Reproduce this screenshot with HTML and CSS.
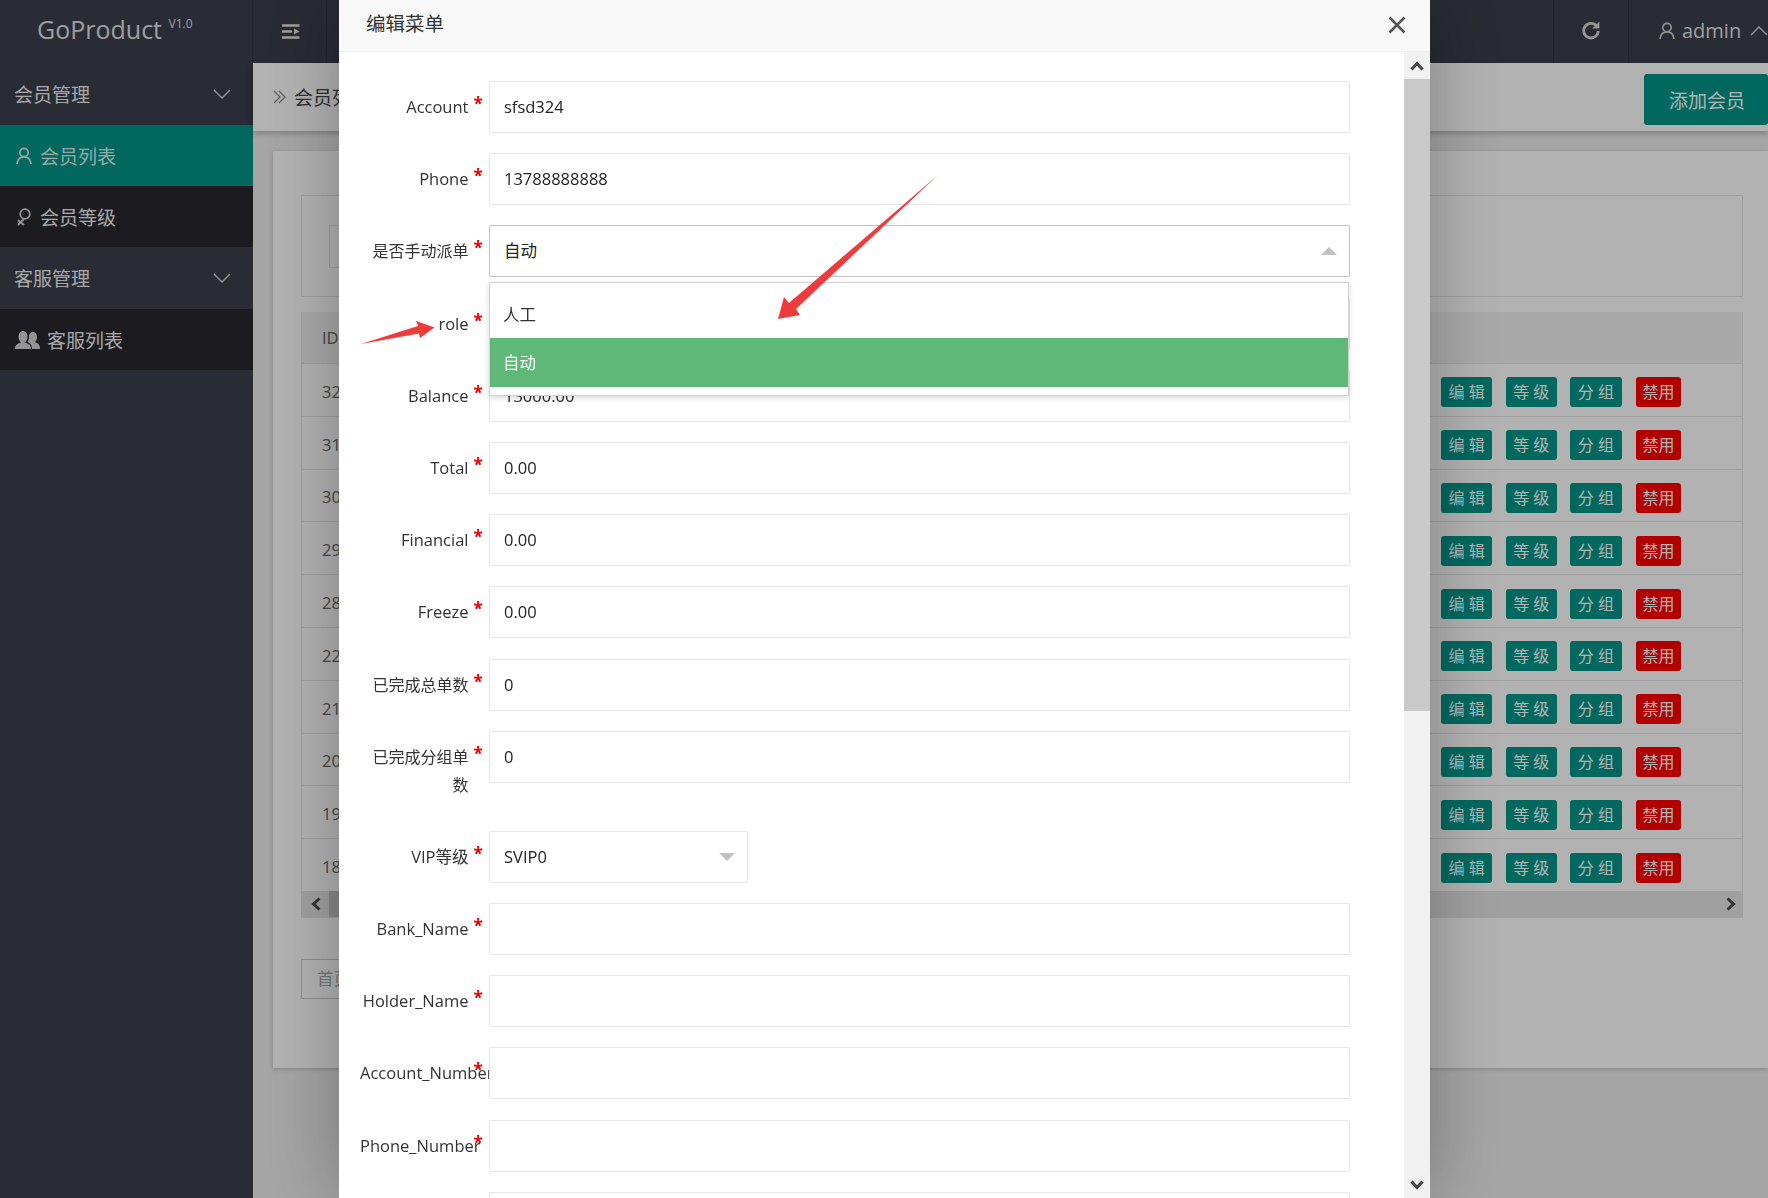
FILE: index.html
```html
<!DOCTYPE html>
<html lang="zh">
<head>
<meta charset="utf-8">
<title>GoProduct</title>
<link rel="stylesheet" href="styles.css">
</head>
<body>
<div class="app">
  <header class="topbar">
    <div class="logo">GoProduct <sup>V1.0</sup></div>
    <div class="top-cell menu-cell">
      <svg width="18" height="15" viewBox="0 0 18 15"><path d="M0 1.500h17.500M0 7.500h10M0 13.500h17.500" stroke="#e4e4e4" stroke-width="2.400" fill="none"/><path d="M12 4.500l5.500 3-5.500 3z" fill="#e4e4e4"/></svg>
    </div>
    <div class="top-spacer"></div>
    <div class="top-cell refresh-cell">
      <svg width="20" height="20" viewBox="0 0 20 20"><path d="M15.800 6.200A7.300 7.300 0 1 0 17.300 11" stroke="#d4d4d4" stroke-width="2.800" fill="none"/><path d="M18.400 1.400v7.200h-7.200z" fill="#d4d4d4"/></svg>
    </div>
    <div class="user-cell">
      <svg width="16" height="18" viewBox="0 0 16 18"><circle cx="8" cy="5.500" r="4.200" stroke="#cfcfcf" stroke-width="1.700" fill="none"/><path d="M1 17c.4-4.500 3-7.200 7-7.200s6.600 2.700 7 7.200" stroke="#cfcfcf" stroke-width="1.700" fill="none"/></svg>
      <span class="user-name">admin</span>
      <svg class="user-arrow" width="18" height="10" viewBox="0 0 18 10"><path d="M1 9l8-8 8 8" stroke="#cfcfcf" stroke-width="1.500" fill="none"/></svg>
    </div>
  </header>
  <div class="content-row">
    <nav class="sidebar">
      <div class="nav-group">会员管理<svg width="18" height="11" viewBox="0 0 18 11"><path d="M1 1l8 8 8-8" stroke="#cfcfcf" stroke-width="1.500" fill="none"/></svg></div>
      <div class="nav-item active">
        <svg width="16" height="18" viewBox="0 0 16 18"><circle cx="8" cy="5.500" r="4.200" stroke="#d8efec" stroke-width="1.700" fill="none"/><path d="M1 17c.4-4.500 3-7.200 7-7.200s6.600 2.700 7 7.200" stroke="#d8efec" stroke-width="1.700" fill="none"/></svg>
        <span>会员列表</span>
      </div>
      <div class="nav-item">
        <svg width="16" height="18" viewBox="0 0 16 18"><circle cx="9" cy="6" r="4.800" stroke="#d4d4d4" stroke-width="1.800" fill="none"/><path d="M8 11L2 17M2 12l6 5" stroke="#d4d4d4" stroke-width="1.800" fill="none"/></svg>
        <span>会员等级</span>
      </div>
      <div class="nav-group">客服管理<svg width="18" height="11" viewBox="0 0 18 11"><path d="M1 1l8 8 8-8" stroke="#cfcfcf" stroke-width="1.500" fill="none"/></svg></div>
      <div class="nav-item">
        <svg class="users-icon" width="25" height="18" viewBox="0 0 25 18"><path d="M0 18c0-4 2-5 6-6.500-2-2-2.500-4-2.500-6C3.500 2.500 5.500 0 8 0s4.500 2.500 4.500 5.500c0 2-.5 4-2.500 6 4 1.500 6 2.500 6 6.500z" fill="#d4d4d4"/><path d="M17 18c0-4-1.500-5.500-4.500-7 1-1.500 1.500-3.500 1.500-5.500C14 3 15.500 1 18 1s4 2.500 4 5c0 2-.5 3.500-2 5 3.500 1.500 5 3 5 7z" fill="#d4d4d4"/></svg>
        <span>客服列表</span>
      </div>
    </nav>
    <main class="main">
      <div class="crumb-bar">
        <div class="crumb"><svg class="crumb-mark" width="14" height="14" viewBox="0 0 14 14"><path d="M1 1l6 6-6 6M6 1l6 6-6 6" stroke="#888" stroke-width="1.300" fill="none"/></svg>会员列表</div>
        <div class="add-btn">添加会员</div>
      </div>
      <section class="panel">
        <div class="search-card"><div class="search-input"></div></div>
        <div class="table">
          <div class="thead">ID</div>
          <div class="tr"><div class="td-id">32</div><div class="ops"><span class="btn">编 辑</span><span class="btn">等 级</span><span class="btn">分 组</span><span class="btn btn-red">禁用</span></div></div>
          <div class="tr"><div class="td-id">31</div><div class="ops"><span class="btn">编 辑</span><span class="btn">等 级</span><span class="btn">分 组</span><span class="btn btn-red">禁用</span></div></div>
          <div class="tr"><div class="td-id">30</div><div class="ops"><span class="btn">编 辑</span><span class="btn">等 级</span><span class="btn">分 组</span><span class="btn btn-red">禁用</span></div></div>
          <div class="tr"><div class="td-id">29</div><div class="ops"><span class="btn">编 辑</span><span class="btn">等 级</span><span class="btn">分 组</span><span class="btn btn-red">禁用</span></div></div>
          <div class="tr"><div class="td-id">28</div><div class="ops"><span class="btn">编 辑</span><span class="btn">等 级</span><span class="btn">分 组</span><span class="btn btn-red">禁用</span></div></div>
          <div class="tr"><div class="td-id">22</div><div class="ops"><span class="btn">编 辑</span><span class="btn">等 级</span><span class="btn">分 组</span><span class="btn btn-red">禁用</span></div></div>
          <div class="tr"><div class="td-id">21</div><div class="ops"><span class="btn">编 辑</span><span class="btn">等 级</span><span class="btn">分 组</span><span class="btn btn-red">禁用</span></div></div>
          <div class="tr"><div class="td-id">20</div><div class="ops"><span class="btn">编 辑</span><span class="btn">等 级</span><span class="btn">分 组</span><span class="btn btn-red">禁用</span></div></div>
          <div class="tr"><div class="td-id">19</div><div class="ops"><span class="btn">编 辑</span><span class="btn">等 级</span><span class="btn">分 组</span><span class="btn btn-red">禁用</span></div></div>
          <div class="tr"><div class="td-id">18</div><div class="ops"><span class="btn">编 辑</span><span class="btn">等 级</span><span class="btn">分 组</span><span class="btn btn-red">禁用</span></div></div>
          <div class="hscroll">
            <div class="hscroll-btn"><svg width="12" height="14" viewBox="0 0 12 14"><path d="M9.500 1.500L3.500 7l6 5.500" stroke="#4a4a4a" stroke-width="3" fill="none"/></svg></div>
            <div class="hscroll-thumb"></div>
            <div class="hscroll-btn hscroll-end"><svg width="12" height="14" viewBox="0 0 12 14"><path d="M2.500 1.500L8.500 7l-6 5.500" stroke="#4a4a4a" stroke-width="3" fill="none"/></svg></div>
          </div>
        </div>
        <div class="pager">首页</div>
      </section>
    </main>
  </div>
</div>

<div class="overlay"></div>

<div class="modal">
  <div class="modal-head">
    <span class="modal-title">编辑菜单</span>
    <svg class="modal-close" width="18" height="18" viewBox="0 0 18 18"><path d="M1.500 1.500l15 15M16.500 1.500l-15 15" stroke="#555" stroke-width="2.500" fill="none"/></svg>
  </div>
  <div class="modal-body">
    <form class="form">
      <div class="row"><label class="label">Account<i class="star">*</i></label><div class="input">sfsd324</div></div>
      <div class="row"><label class="label">Phone<i class="star">*</i></label><div class="input">13788888888</div></div>
      <div class="row"><label class="label label-cjk">是否手动派单<i class="star">*</i></label><div class="input input-open">自动<span class="tri-up"></span>
        <div class="dropdown"><div class="option">人工</div><div class="option selected">自动</div></div>
      </div></div>
      <div class="row"><label class="label">role<i class="star">*</i></label><div class="input"></div></div>
      <div class="row"><label class="label">Balance<i class="star">*</i></label><div class="input">13000.00</div></div>
      <div class="row"><label class="label">Total<i class="star">*</i></label><div class="input">0.00</div></div>
      <div class="row"><label class="label">Financial<i class="star">*</i></label><div class="input">0.00</div></div>
      <div class="row"><label class="label">Freeze<i class="star">*</i></label><div class="input">0.00</div></div>
      <div class="row"><label class="label label-cjk">已完成总单数<i class="star">*</i></label><div class="input">0</div></div>
      <div class="row"><label class="label label-cjk">已完成分组单数<i class="star">*</i></label><div class="input">0</div></div>
      <div class="row"><label class="label">VIP等级<i class="star">*</i></label><div class="input input-short">SVIP0<span class="tri-down"></span></div></div>
      <div class="row"><label class="label">Bank_Name<i class="star">*</i></label><div class="input"></div></div>
      <div class="row"><label class="label">Holder_Name<i class="star">*</i></label><div class="input"></div></div>
      <div class="row"><label class="label">Account_Number<i class="star">*</i></label><div class="input"></div></div>
      <div class="row"><label class="label">Phone_Number<i class="star">*</i></label><div class="input"></div></div>
      <div class="row"><label class="label"></label><div class="input"></div></div>
    </form>
    <div class="vscroll">
      <div class="vscroll-btn"><svg width="14" height="10" viewBox="0 0 14 10"><path d="M1.500 8.500L7 2.500l5.500 6" stroke="#444" stroke-width="3" fill="none"/></svg></div>
      <div class="vscroll-thumb"></div>
      <div class="vscroll-track"></div>
      <div class="vscroll-btn vscroll-bottom"><svg width="14" height="10" viewBox="0 0 14 10"><path d="M1.500 1.500L7 7.500l5.500-6" stroke="#444" stroke-width="3" fill="none"/></svg></div>
    </div>
  </div>
</div>

<svg class="annotations" width="1768" height="1198" viewBox="0 0 1768 1198">
  <polygon class="arrow" points="938,175 796,309 800,315 778,319 784,297 789,303"/>
  <polygon class="arrow" points="361,344 418,326 416,321 434.500,327.500 420,338 419,333.500"/>
</svg>
</body>
</html>
```
FILE: styles.css
```css
* { box-sizing: border-box; }
html, body { margin: 0; height: 1198px; overflow: hidden; }
body {
  font-family: "Open Sans", "Noto Sans CJK SC", sans-serif;
  font-size: 16.5px;
  color: #333;
  background: #ececec;
}
.app { display: flex; flex-direction: column; height: 1198px; }

/* top bar */
.topbar { display: flex; align-items: stretch; height: 63px; background: #3c3f4c; flex: none; }
.logo {
  width: 253px; padding: 12px 0 0 37px; font-size: 25px; line-height: 34px;
  color: #fff; opacity: .85; border-right: 1px solid #33363f; white-space: nowrap;
}
.logo sup { font-size: 12px; vertical-align: 11px; line-height: 0; }
.top-cell { display: flex; align-items: center; justify-content: center; }
.menu-cell { width: 74px; border-right: 1px solid #33363f; padding-left: 2px; }
.top-spacer { flex: 1; }
.refresh-cell { width: 76px; border-left: 1px solid #33363f; border-right: 1px solid #33363f; padding-bottom: 3px; }
.user-cell { width: 139px; display: flex; align-items: center; padding: 0 0 2px 30px; gap: 7px; color: #e2e2e2; font-size: 20px; overflow: hidden; }
.user-arrow { margin-left: 2px; flex: none; }
.user-cell svg:first-child { flex: none; }

/* layout */
.content-row { display: flex; flex: 1; min-height: 0; }
.sidebar { width: 253px; background: #3c3f4c; flex: none; font-size: 19px; color: #f0f0f0; }
.nav-group {
  height: 62px; display: flex; align-items: center; justify-content: space-between;
  padding: 0 22px 0 14px; background: #3c3f4c;
}
.nav-item {
  height: 61px; display: flex; align-items: center; gap: 8px;
  padding-left: 16px; background: #27282f;
}
.nav-item.active { background: #009688; color: #d8efec; }
.users-icon { margin-left: -1px; margin-right: -1px; }

.main { flex: 1; min-width: 0; }
.crumb-bar {
  height: 68px; background: #fff; display: flex; align-items: center; justify-content: space-between;
  box-shadow: 0 2px 6px rgba(0,0,0,.25);
}
.crumb { padding-left: 20px; font-size: 19px; display: flex; align-items: center; color: #444; }
.crumb-mark { margin-right: 7px; flex: none; }
.add-btn {
  width: 124px; height: 51px; margin-top: 5px; background: #009688; color: #fff; border-radius: 3px;
  font-size: 19px; display: flex; align-items: center; padding-left: 25px;
}
.panel {
  margin: 20px 0 0 20px; height: 917px; background: #fff; padding: 44px 25px 0 28px;
  box-shadow: 0 1px 4px rgba(0,0,0,.2);
}
.search-card { height: 102px; border: 1px solid #e6e6e6; padding: 29px 0 0 27px; }
.search-input { width: 200px; height: 43px; border: 1px solid #e6e6e6; }
.table { margin-top: 15px; border: 1px solid #e6e6e6; border-top: 0; }
.thead { height: 51px; background: #f2f2f2; padding-left: 20px; line-height: 51px; color: #666; }
.tr { height: 52.800px; display: grid; grid-template-columns: 1139px auto; align-items: center; border-top: 1px solid #e6e6e6; }
.td-id { padding: 3px 0 0 20px; color: #666; }
.ops { display: flex; gap: 13.500px; padding-top: 5px; }
.btn {
  height: 30px; padding: 0 7.500px; background: #009688; color: #fff; border-radius: 3px;
  font-size: 16px; line-height: 31px; white-space: nowrap;
}
.btn-red { background: #f00; padding: 0 6.500px; margin-left: 1px; }
.hscroll { height: 26px; background: #e6e6e6; display: flex; }
.hscroll-btn { width: 27px; display: flex; align-items: center; justify-content: center; }
.hscroll-thumb { width: 400px; background: #c4c4c4; }
.hscroll-end { margin-left: auto; padding-left: 4px; }
.pager {
  margin-top: 41px; width: 90px; height: 40px; border: 1px solid #ccc; padding-left: 15px;
  line-height: 38px; color: #aaa;
}

/* overlay and modal */
.overlay { position: fixed; inset: 0; background: rgba(0,0,0,.3); }
.modal {
  position: fixed; left: 339px; top: 0; width: 1091px; height: 1198px; background: #fff;
  box-shadow: 0 0 70px rgba(0,0,0,.3); display: flex; flex-direction: column;
}
.modal-head {
  height: 52px; flex: none; background: #f8f8f8; border-bottom: 1px solid #eee;
  display: flex; align-items: center; justify-content: space-between; padding: 0 24px 6px 27px;
}
.modal-title { font-size: 19.500px; color: #333; }
.modal-close { margin-top: 5px; }
.modal-body { flex: 1; min-height: 0; display: flex; overflow: hidden; }
.form { width: 1065px; padding: 29px 54px 0 21px; flex: none; }
.row { display: flex; align-items: flex-start; margin-bottom: 20.200px; }
.label {
  position: relative; width: 129px; flex: none; padding: 12px 20.500px 12px 0; line-height: 28px;
  text-align: right; color: #333; min-height: 52px;
}
.label-cjk { font-size: 16px; }
.star {
  position: absolute; left: 113.500px; top: 11px; color: #e60000; font-style: normal; font-weight: 700; font-size: 17px; line-height: 24px;
}
.input {
  position: relative; flex: 1; height: 52px; background: #fff; border: 1px solid #e6e6e6; border-radius: 2px;
  padding-left: 14px; line-height: 50px; color: #222;
}
.input-open { border-color: #c2c2c2; }
.input-short { flex: none; width: 259px; }
.tri-up, .tri-down { position: absolute; width: 0; height: 0; border-left: 8px solid transparent; border-right: 8px solid transparent; }
.tri-up { right: 12px; top: 21px; border-bottom: 8px solid #c2c2c2; }
.tri-down { right: 12px; top: 21px; border-top: 8px solid #c2c2c2; }
.dropdown {
  position: absolute; z-index: 2; left: -1px; top: 56px; width: 860px; height: 114px; padding-top: 55px;
  background: #fff; border: 1px solid #d2d2d2; box-shadow: 0 2px 6px rgba(0,0,0,.15);
}
.option { height: 49px; line-height: 50px; padding-left: 13px; color: #333; }
.dropdown .option:first-child { position: absolute; left: 0; right: 0; top: 7px; }
.option.selected { background: #5fb878; color: #fff; }
.vscroll { width: 26px; flex: none; display: flex; flex-direction: column; background: #f1f1f1; }
.vscroll-btn { height: 27px; flex: none; display: flex; align-items: center; justify-content: center; }
.vscroll-thumb { height: 632px; flex: none; background: #c9c9c9; }
.vscroll-track { flex: 1; }

.annotations { position: fixed; left: 0; top: 0; pointer-events: none; }
.arrow { fill: #ee3b3b; }
```
